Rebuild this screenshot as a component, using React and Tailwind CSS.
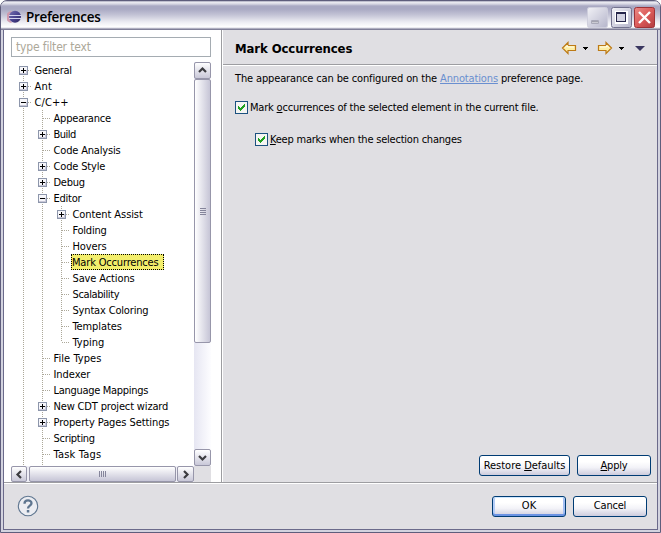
import React from "react";

const UI = "font-['DejaVu_Sans_Condensed','DejaVu_Sans',sans-serif]";

// level, expander sign ("" for a leaf), label, letter spacing
const ROWS = [
  [0, "+", "General", "tracking-[-0.25px]"],
  [0, "+", "Ant", "tracking-[0.2px]"],
  [0, "-", "C/C++", "tracking-[0.1px]"],
  [1, "", "Appearance", "tracking-[-0.2px]"],
  [1, "+", "Build", "tracking-[-0.5px]"],
  [1, "", "Code Analysis", "tracking-[-0.17px]"],
  [1, "+", "Code Style", "tracking-[-0.17px]"],
  [1, "+", "Debug", "tracking-[-0.25px]"],
  [1, "-", "Editor", "tracking-[-0.25px]"],
  [2, "+", "Content Assist", "tracking-[-0.08px]"],
  [2, "", "Folding", "tracking-[-0.25px]"],
  [2, "", "Hovers", "tracking-[-0.1px]"],
  [2, "", "Mark Occurrences", "tracking-[-0.17px]"],
  [2, "", "Save Actions", "tracking-[-0.12px]"],
  [2, "", "Scalability", "tracking-[-0.38px]"],
  [2, "", "Syntax Coloring", "tracking-[-0.17px]"],
  [2, "", "Templates", "tracking-[-0.1px]"],
  [2, "", "Typing", "tracking-[0px]"],
  [1, "", "File Types", "tracking-[0.05px]"],
  [1, "", "Indexer", "tracking-[-0.05px]"],
  [1, "", "Language Mappings", "tracking-[-0.3px]"],
  [1, "+", "New CDT project wizard", "tracking-[-0.16px]"],
  [1, "+", "Property Pages Settings", "tracking-[-0.08px]"],
  [1, "", "Scripting", "tracking-[-0.3px]"],
  [1, "", "Task Tags", "tracking-[0.2px]"],
];

function Guide({ top = true, bottom = true, branch = false, kind = "" }) {
  const dots = { stroke: "#aca899", strokeDasharray: "1 1", strokeWidth: 1 };
  return (
    <svg className="h-4 w-[19px] shrink-0" viewBox="0 0 19 16" shapeRendering="crispEdges">
      {top && <path d="M9.5 0V8" {...dots} />}
      {bottom && <path d="M9.5 8V16" {...dots} />}
      {branch && <path d="M10 8.5H18" {...dots} />}
      {kind && (
        <g>
          <rect x="5.5" y="4.5" width="8" height="8" fill="#f6f6fa" stroke="#8d96ab" />
          <path d="M6 11.5H13M12.5 8V12" stroke="#c9c8d8" />
          <path d={kind === "+" ? "M7 8.5H12M9.5 6V11" : "M7 8.5H12"} stroke="#000" />
        </g>
      )}
    </svg>
  );
}

function TreeRow({ index }) {
  const [level, kind, label, spacing] = ROWS[index];
  const last = label === "Typing";
  const selected = label === "Mark Occurrences";
  return (
    <div className="flex h-4 shrink-0 items-center whitespace-nowrap">
      {level > 0 && <Guide />}
      {level > 1 && <Guide />}
      <Guide top={index > 0} bottom={!last} branch kind={kind} />
      <span
        className={`h-4 ${spacing} ${
          selected ? "w-[93px] border border-dotted border-black bg-[#f3ee6c] leading-[15px]" : "pl-[1.5px] leading-[17px]"
        }`}
      >
        {label}
      </span>
    </div>
  );
}

function ScrollButton({ d, box }) {
  return (
    <div className={`flex shrink-0 items-center justify-center rounded-[2px] border border-[#9796aa] bg-linear-to-b from-white to-[#c9c8d8] ${box}`}>
      <svg width="9" height="9" viewBox="0 0 9 9" fill="none" stroke="#3c3c40" strokeWidth="2.2">
        <path d={d} />
      </svg>
    </div>
  );
}

function PushButton({ children, className, primary }) {
  return (
    <button
      className={`flex h-[21px] items-center justify-center rounded-[3px] border border-[#003c74] bg-linear-to-b from-white from-30% via-[#f3f3f8] via-60% to-[#cdccdd] whitespace-nowrap ${
        primary ? "shadow-[inset_0_1px_0_#cee7ff,inset_0_-2px_0_#6b93e3,inset_2px_0_0_#b5cdf7,inset_-2px_0_0_#a3bff3]" : ""
      } ${className}`}
    >
      {children}
    </button>
  );
}

function Check({ children, className }) {
  return (
    <label className={`flex h-[13px] items-center whitespace-nowrap ${className}`}>
      <svg width="13" height="13" viewBox="0 0 13 13" className="mr-[2px] shrink-0" shapeRendering="crispEdges">
        <rect x=".5" y=".5" width="12" height="12" fill="#f5f5f2" stroke="#1c5180" />
        <path d="M3 5h1v1h1v1h1v-1h1v-1h1v-1h1v-1h1v3h-1v1h-1v1h-1v1h-1v1h-1v-1h-1v-1h-1z" fill="#21a121" />
      </svg>
      {children}
    </label>
  );
}

function TitleBar() {
  return (
    <div className="flex h-[29px] shrink-0 items-center bg-[linear-gradient(to_bottom,#8f8fa8_0,#eeeef4_1px,#d6d6e2_3px,#a9a9c3_5px,#a9a9c3_8px,#c4c4d6_14px,#ececf2_21px,#ffffff_26px,#d8d8e2_27px,#85849c_28px,#7b7a94_29px)] pr-[5px] pl-[6px]">
      <svg width="15" height="15" viewBox="0 0 15 15" className="mt-px shrink-0">
        <defs>
          <linearGradient id="sphere" x1="0" y1="0" x2="1" y2="1">
            <stop offset="0" stopColor="#7771b0" />
            <stop offset=".5" stopColor="#4a4390" />
            <stop offset="1" stopColor="#2c255e" />
          </linearGradient>
        </defs>
        <path d="M5 2A6 6 0 0 0 5 14A8 8 0 0 1 5 2" fill="#d09aae" />
        <circle cx="8" cy="7.8" r="6" fill="url(#sphere)" />
        <path d="M2 6.500H14.500M2 9.500H14.500" stroke="#d5d4ef" />
      </svg>
      <span className="mt-[2px] ml-[4px] font-['Open_Sans','Noto_Sans',sans-serif] text-[13.5px] leading-5 font-semibold tracking-[-0.3px] text-black">
        Preferences
      </span>
      <div className="mt-[3px] ml-auto flex gap-[2px]">
        <svg width="21" height="21" viewBox="0 0 21 21">
          <defs>
            <linearGradient id="silver" x1="0" y1="0" x2="1" y2="1">
              <stop offset="0" stopColor="#f1f1f6" />
              <stop offset="1" stopColor="#b5b5cb" />
            </linearGradient>
            <linearGradient id="red" x1="0" y1="0" x2="1" y2="1">
              <stop offset="0" stopColor="#ea8c88" />
              <stop offset=".5" stopColor="#dc5b5a" />
              <stop offset="1" stopColor="#b13c40" />
            </linearGradient>
          </defs>
          <rect x=".5" y=".5" width="20" height="20" rx="2" fill="url(#silver)" stroke="#cfcfdd" />
          <path d="M4.500 13.500h7v3h-7z" fill="#f2f2f6" stroke="#a9a9b8" />
          <path d="M5 14h6v1.500h-6z" fill="#a4a4b0" />
        </svg>
        <svg width="21" height="21" viewBox="0 0 21 21" className="ml-px">
          <rect x=".5" y=".5" width="20" height="20" rx="2" fill="url(#silver)" stroke="#73738f" />
          <rect x="5" y="5" width="11" height="11" fill="none" stroke="#fff" strokeWidth="2" />
          <rect x="5" y="6" width="10" height="9" fill="#d3d3e1" />
          <rect x="5.500" y="6.500" width="9" height="8" fill="none" stroke="#26264a" />
          <path d="M5 6H15" stroke="#26264a" strokeWidth="2" />
        </svg>
        <svg width="21" height="21" viewBox="0 0 21 21">
          <rect x=".5" y=".5" width="20" height="20" rx="2" fill="url(#red)" stroke="#9e3237" />
          <path d="M5 5L16 16M16 5L5 16" stroke="#fff" strokeWidth="2.400" />
        </svg>
      </div>
    </div>
  );
}

function Arrow({ flip }) {
  return (
    <svg width="16" height="14" viewBox="0 0 16 14" className={flip ? "-scale-x-100" : ""}>
      <path d="M1.500 7L7 1.500V4.500H14.500V9.500H7V12.500Z" fill="#fdeea5" stroke="#bd7a16" strokeWidth="1.200" />
      <path d="M4 6.500L6.500 4.500V6H13" stroke="#fffbe6" fill="none" />
    </svg>
  );
}

function Caret() {
  return (
    <svg width="5" height="3" viewBox="0 0 5 3" shapeRendering="crispEdges">
      <path d="M0 0h5v1h-1v1h-1v1h-1v-1h-1v-1h-1z" />
    </svg>
  );
}

export default function App() {
  return (
    <div className="h-[533px] w-[661px] overflow-hidden bg-white">
      <div className={`flex h-full w-full flex-col overflow-hidden rounded-t-[7px] border border-[#5e5d7c] bg-[#d3d3df] text-[11px] text-black ${UI}`}>
        <TitleBar />
        <div className="mx-[2px] mb-[2px] flex min-h-0 flex-1 flex-col border border-t-0 border-[#6b6a8b] bg-[#e0dfe3]">
          <div className="flex h-[452px] shrink-0">
            <div className="flex w-[217px] shrink-0 flex-col bg-white pt-[7px] pl-[7px]">
              <div className="flex h-5 w-[200px] shrink-0 items-center border border-[#a5acb2] pl-1 text-[12px] tracking-[-0.16px] text-[#aca899]">
                type filter text
              </div>
              <div className="mt-[5px] flex w-[200px] flex-1">
                <div className="flex w-[183px] flex-col">
                  <div className="flex h-[404px] flex-col overflow-hidden pl-[3px]">
                    {ROWS.map((row, i) => (
                      <TreeRow key={row[2]} index={i} />
                    ))}
                    <div className="flex">
                      <Guide />
                      <Guide />
                    </div>
                  </div>
                  <div className="flex h-4 w-full bg-[#eeeef5]">
                    <ScrollButton box="h-4 w-4" d="M6 1L2.500 4.500L6 8" />
                    <div className="ml-[2px] flex h-4 w-[147px] shrink-0 items-center justify-center gap-px rounded-[2px] border border-[#9796aa] bg-linear-to-b from-white to-[#c6c5d6]">
                      <i className="h-[6px] w-px bg-[#85859b]" />
                      <i className="h-[6px] w-px bg-[#85859b]" />
                      <i className="h-[6px] w-px bg-[#85859b]" />
                      <i className="h-[6px] w-px bg-[#85859b]" />
                    </div>
                    <div className="ml-px flex">
                      <ScrollButton box="h-4 w-[17px]" d="M3 1L6.500 4.500L3 8" />
                    </div>
                  </div>
                </div>
                <div className="flex w-[17px] flex-col bg-[#e0dfe3]">
                  <div className="flex h-[404px] flex-col bg-linear-to-r from-[#e6e6f2] to-[#fdfdff]">
                    <ScrollButton box="h-[17px] w-[17px]" d="M1 6L4.500 2.500L8 6" />
                    <div className="flex h-[264px] flex-col items-center justify-center gap-px rounded-[2px] border border-[#9796aa] bg-linear-to-r from-white to-[#c6c5d6]">
                      <i className="h-px w-[6px] bg-[#85859b]" />
                      <i className="h-px w-[6px] bg-[#85859b]" />
                      <i className="h-px w-[6px] bg-[#85859b]" />
                      <i className="h-px w-[6px] bg-[#85859b]" />
                    </div>
                    <div className="mt-auto flex">
                      <ScrollButton box="h-[17px] w-[17px]" d="M1 3L4.500 6.500L8 3" />
                    </div>
                  </div>
                </div>
              </div>
            </div>
            <div className="w-[2px] shrink-0 border-l border-[#9d9da1] bg-white" />
            <div className="flex min-w-0 flex-1 flex-col">
              <div className="flex h-9 shrink-0 items-center border-b border-white pl-3 shadow-[inset_0_-1px_0_#9d9da1]">
                <h1 className="pt-[2px] text-[13px] font-bold tracking-[-0.1px]">Mark Occurrences</h1>
                <div className="ml-auto flex items-center pt-px pr-[12px]">
                  <Arrow />
                  <div className="ml-[6px] flex">
                    <Caret />
                  </div>
                  <div className="ml-[9px] flex">
                    <Arrow flip />
                  </div>
                  <div className="ml-[6px] flex">
                    <Caret />
                  </div>
                  <svg width="10" height="5" viewBox="0 0 10 5" className="ml-[11px]">
                    <path d="M0 0H10L5 5Z" fill="#3a3760" />
                  </svg>
                </div>
              </div>
              <p className="mt-[6px] pl-3 leading-[14px] whitespace-nowrap tracking-[-0.14px]">
                The appearance can be configured on the <a className="text-[#6a8fd0] underline">Annotations</a> preference page.
              </p>
              <Check className="mt-[15px] ml-3 tracking-[-0.19px]">
                <span className="pt-[2px]">
                  Mark <u>o</u>ccurrences of the selected element in the current file.
                </span>
              </Check>
              <Check className="mt-[19px] ml-8 tracking-[-0.22px]">
                <span className="pt-[2px]">
                  <u>K</u>eep marks when the selection changes
                </span>
              </Check>
              <div className="mt-auto mr-[6px] mb-[6px] flex justify-end gap-[7px]">
                <PushButton className="w-[91px] tracking-[-0.02px]">
                  <span className="pt-px">
                    Restore <u>D</u>efaults
                  </span>
                </PushButton>
                <PushButton className="w-[74px] tracking-[-0.2px]">
                  <span className="pt-px">
                    <u>A</u>pply
                  </span>
                </PushButton>
              </div>
            </div>
          </div>
          <div className="flex flex-1 items-center border-t border-[#9d9da1] pr-[10px] pb-px pl-[13px] shadow-[inset_0_1px_0_#fff]">
            <svg width="22" height="22" viewBox="0 0 22 22" fill="none" stroke="#5f7690">
              <circle cx="11" cy="11" r="9.700" fill="#ecedf2" strokeWidth="1.100" />
              <path d="M7.500 8.700C7.500 4.300 14.500 4.500 14.500 8.300C14.500 10.700 11 10.500 11 13.400" strokeWidth="2.300" />
              <path d="M9.800 15h2.500v2.500h-2.500z" fill="#5f7690" stroke="none" />
            </svg>
            <div className="mt-[2px] ml-auto flex gap-[7px]">
              <PushButton primary className="w-[74px]">
                <span>OK</span>
              </PushButton>
              <PushButton className="w-[74px] tracking-[-0.2px]">
                <span>Cancel</span>
              </PushButton>
            </div>
          </div>
        </div>
      </div>
    </div>
  );
}
